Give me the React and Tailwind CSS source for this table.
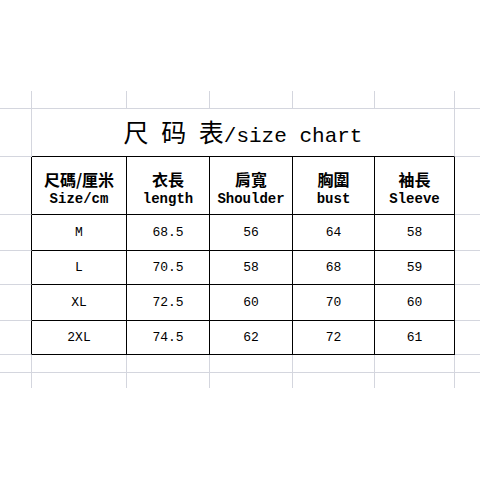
import React from 'react';

const HEADERS = [
    ['尺碼/厘米', 'Size/cm'],
    ['衣長', 'length'],
    ['肩寬', 'Shoulder'],
    ['胸圍', 'bust'],
    ['袖長', 'Sleeve'],
];

const ROWS = [
    ['M', '68.5', '56', '64', '58'],
    ['L', '70.5', '58', '68', '59'],
    ['XL', '72.5', '60', '70', '60'],
    ['2XL', '74.5', '62', '72', '61'],
];

// row heights of the sheet, top to bottom
const DATA_HEIGHTS = ['h-[36px]', 'h-[34px]', 'h-[36px]', 'h-[34px]'];

// empty spreadsheet row: 7 cells with gray grid lines
const BlankRow = ({ h, bottom = true }) => (
    <>
        {[0, 1, 2, 3, 4, 5, 6].map(i => (
            <div
                key={i}
                className={`${h} border-[#d4d6de] ${i < 6 ? 'border-r' : ''} ${bottom ? 'border-b' : ''}`}
            />
        ))}
    </>
);

export default function App() {
    return (
        <div className="w-[480px] h-[480px] bg-white pt-[91px] text-black">
            <div className="grid grid-cols-[32px_95px_83px_83px_82px_80px_1fr]">
                <BlankRow h="h-[18px]" />

                {/* title row, merged over the table columns */}
                <div className="h-[48px] border-r border-b border-[#d4d6de]" />
                <div className="col-span-5 h-[48px] flex items-center justify-center border-b border-b-black border-r border-r-[#d4d6de]">
                    <span className="font-['Liberation_Mono','Noto_Sans_CJK_SC',monospace] text-[21px] leading-none whitespace-pre">
                        <span className="font-['Noto_Sans_CJK_SC',sans-serif] text-[25px]">尺</span>
                        {' '}
                        <span className="font-['Noto_Sans_CJK_SC',sans-serif] text-[25px]">码</span>
                        {' '}
                        <span className="font-['Noto_Sans_CJK_SC',sans-serif] text-[25px]">表</span>
                        /size chart
                    </span>
                </div>
                <div className="h-[48px] border-b border-[#d4d6de]" />

                {/* header row */}
                <div className="h-[58px] border-b border-b-[#d4d6de] border-r border-r-black" />
                {HEADERS.map(([zh, en]) => (
                    <div key={en} className="h-[58px] border-r border-b border-black flex flex-col items-center justify-center pt-[6px] font-bold">
                        <span className="font-['Noto_Sans_CJK_TC',sans-serif] text-[16px] leading-[20px]">{zh}</span>
                        <span className="font-['Liberation_Mono',monospace] text-[14px] leading-[20px]">{en}</span>
                    </div>
                ))}
                <div className="h-[58px] border-b border-[#d4d6de]" />

                {/* data rows */}
                {ROWS.map((row, r) => (
                    <React.Fragment key={row[0]}>
                        <div className={`${DATA_HEIGHTS[r]} border-b border-b-[#d4d6de] border-r border-r-black`} />
                        {row.map((val, c) => (
                            <div
                                key={c}
                                className={`${DATA_HEIGHTS[r]} border-r border-b border-black flex items-center justify-center font-['Liberation_Mono',monospace] text-[13px]`}
                            >
                                {val}
                            </div>
                        ))}
                        <div className={`${DATA_HEIGHTS[r]} border-b border-[#d4d6de]`} />
                    </React.Fragment>
                ))}

                <BlankRow h="h-[18px]" />
                <BlankRow h="h-[15px]" bottom={false} />
            </div>
        </div>
    );
}
